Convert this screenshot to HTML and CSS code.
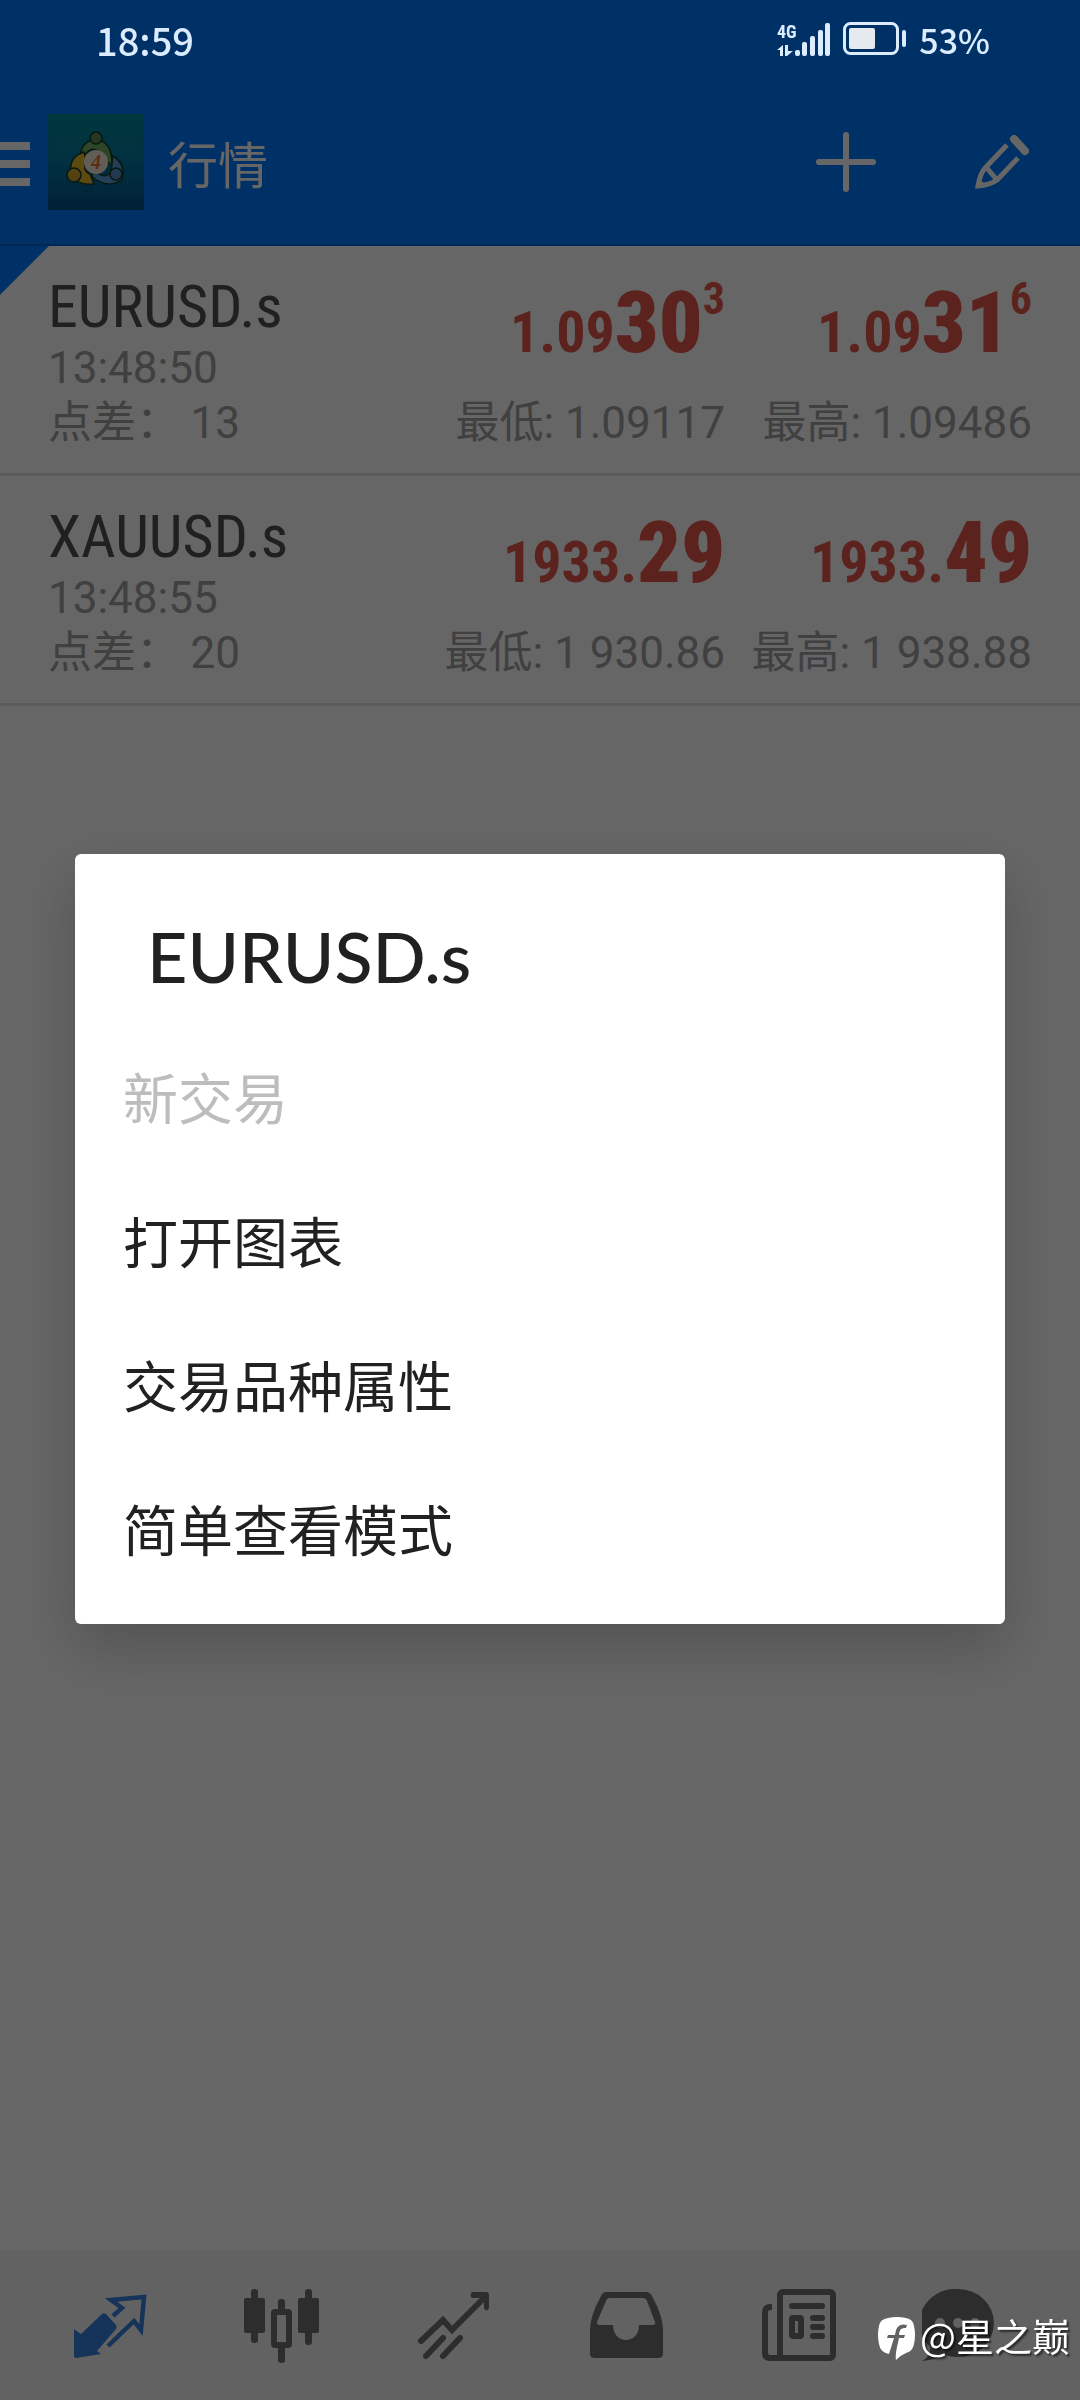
FILE: index.html
```html
<!DOCTYPE html>
<html lang="zh-CN">
<head>
  <meta charset="UTF-8">
  <meta name="viewport" content="width=device-width, initial-scale=1">
  <title>行情</title>
  <link rel="stylesheet" href="styles.css">
</head>
<body>
  <header class="header">
    <div class="status">
      <span class="clock">18:59</span>
      <div class="status-icons">
        <svg width="54" height="38" viewBox="0 -3 54 38" fill="currentColor">
          <text class="net" x="0" y="15">4G</text>
          <path d="M0 27l6-5v11H3v-6zM8 22h3v6h5l-6 5H8z"/>
          <rect x="18" y="27" width="5" height="6" rx="2"/>
          <rect x="25" y="19" width="5" height="14" rx="2"/>
          <rect x="33" y="13" width="5" height="20" rx="2"/>
          <rect x="41" y="7" width="5" height="26" rx="2"/>
          <rect x="48" y="0" width="5" height="33" rx="2"/>
        </svg>
        <svg width="64" height="34" viewBox="0 0 64 34">
          <rect x="1.500" y="1.500" width="53" height="30" rx="6" fill="none" stroke="currentColor" stroke-width="3"/>
          <rect x="6" y="6" width="26" height="21" rx="2" fill="#e6e9ee"/>
          <rect x="59" y="8" width="4" height="17" rx="2" fill="currentColor"/>
        </svg>
        <span class="battery">53%</span>
      </div>
    </div>

    <div class="toolbar">
      <button class="menu" aria-label="菜单"><i></i><i></i><i></i></button>
      <svg class="logo" viewBox="0 0 96 96">
        <defs>
          <linearGradient id="sky" x1="0" y1="0" x2="0" y2="1">
            <stop offset="0" stop-color="#008a98"/>
            <stop offset=".5" stop-color="#0078a0"/>
            <stop offset="1" stop-color="#005088"/>
          </linearGradient>
        </defs>
        <rect width="96" height="96" fill="url(#sky)"/>
        <path d="M0 16H96M0 32H96M0 48H96M0 64H96M0 80H96M16 0V96M32 0V96M48 0V96M64 0V96M80 0V96" stroke="#fff" stroke-opacity=".06"/>
        <g stroke="#123d2c" stroke-width="1.500">
          <path d="M33 44Q31 28 48 25Q65 28 64 52L55 43Q49 33 42 36Z" fill="#6fae62"/>
          <path d="M36 38Q20 43 23 60Q28 72 46 70L42 60Q34 57 38 46Z" fill="#e8b82c"/>
          <path d="M65 42Q78 50 74 65Q62 76 44 63L45 56Q58 67 63 57Z" fill="#5a9fd8"/>
          <circle cx="48" cy="24" r="6" fill="#5c8a50"/>
          <circle cx="26" cy="61" r="7" fill="#d0a030"/>
          <circle cx="68" cy="60" r="6" fill="#5592c8"/>
        </g>
        <circle cx="48" cy="48" r="12" fill="#f4ead8"/>
        <text class="logo-num" x="48" y="55" text-anchor="middle">4</text>
      </svg>
      <h1>行情</h1>
      <button class="add" aria-label="添加">
        <svg width="60" height="60" viewBox="0 0 60 60" fill="none" stroke="#fff" stroke-width="6" stroke-linecap="round">
          <path d="M30 3V57M3 30H57"/>
        </svg>
      </button>
      <button aria-label="编辑">
        <svg width="54" height="54" viewBox="0 0 54 54" fill="none" stroke="#fff" stroke-width="5">
          <path d="M32 10L11 32Q5 38 3 51Q15 50 22 45L43 23M11 32L22 45"/>
          <path d="M3 52V43L11 50Z" fill="#fff" stroke="none"/>
          <path d="M39 4L50 16" stroke-width="8" stroke-linecap="round"/>
        </svg>
      </button>
    </div>
  </header>

  <main>
    <ul class="quotes">
      <li class="quote selected">
        <div class="info">
          <h2>EURUSD.s</h2>
          <p>13:48:50</p>
          <p class="spread"><span>点差：</span><span>13</span></p>
        </div>
        <div class="side">
          <div class="price">1.09<b>30</b><sup>3</sup></div>
          <p>最低: 1.09117</p>
        </div>
        <div class="side">
          <div class="price">1.09<b>31</b><sup>6</sup></div>
          <p>最高: 1.09486</p>
        </div>
      </li>
      <li class="quote">
        <div class="info">
          <h2>XAUUSD.s</h2>
          <p>13:48:55</p>
          <p class="spread"><span>点差：</span><span>20</span></p>
        </div>
        <div class="side">
          <div class="price">1933.<b>29</b></div>
          <p>最低: 1 930.86</p>
        </div>
        <div class="side">
          <div class="price">1933.<b>49</b></div>
          <p>最高: 1 938.88</p>
        </div>
      </li>
    </ul>
  </main>

  <nav class="tabs">
    <button class="active" aria-label="行情">
      <svg width="76" height="74" viewBox="-2 -6 76 74">
        <path d="M0 34L7 39L27 20Q29 17 32 19L42 30Q43 32 42 34L23 56L27 59L2 63Q0 63 0 61Z" fill="currentColor"/>
        <path d="M39 21L48 13L37 5L70 2L67 35L60 26L34 51" fill="none" stroke="currentColor" stroke-width="4.500"/>
      </svg>
    </button>
    <button aria-label="图表">
      <svg width="76" height="74" viewBox="0 0 76 74" fill="currentColor">
        <rect y="9" width="21" height="35" rx="2"/>
        <rect x="7" width="7" height="54" rx="3"/>
        <rect x="54" y="9" width="21" height="35" rx="2"/>
        <rect x="61" width="7" height="56" rx="3"/>
        <rect x="34" y="10" width="7" height="14" rx="3"/>
        <rect x="34" y="56" width="7" height="18" rx="3"/>
        <rect x="30" y="23" width="15" height="33" rx="1" fill="none" stroke="currentColor" stroke-width="6"/>
      </svg>
    </button>
    <button aria-label="交易">
      <svg width="76" height="74" viewBox="-2 -3 76 74" fill="none" stroke="currentColor" stroke-width="6" stroke-linecap="round">
        <path d="M3 49L25 28L34 38L67 5M8 64L25 46M25 64L42 46"/>
        <path d="M54 0H68Q71 0 71 3V16Q68 21 66 16V9L62 6H54Q51 3 54 0Z" fill="currentColor" stroke="none"/>
      </svg>
    </button>
    <button aria-label="历史">
      <svg width="76" height="74" viewBox="-2 -3 76 74" fill="currentColor" fill-rule="evenodd">
        <path d="M16 0H56Q60 0 62 4Q73 24 73 38V62Q73 66 68 66H5Q0 66 0 62V38Q0 24 11 4Q13 0 16 0ZM20 6Q17 6 16 9L7 30Q7 33 9 33H23C23 53 49 53 49 33H63Q66 33 65 30L57 9Q56 6 53 6Z"/>
      </svg>
    </button>
    <button aria-label="新闻">
      <svg width="76" height="74" viewBox="-2 0 76 74" fill="none" stroke="currentColor" stroke-width="6">
        <path d="M10 18H8Q3 18 3 24V64Q3 69 8 69H19"/>
        <rect x="18" y="3" width="53" height="66" rx="3"/>
        <rect x="30" y="29" width="9" height="18" rx="1"/>
        <path d="M30 17H60M51 29H60M51 38H60M51 47H60" stroke-linecap="round"/>
      </svg>
    </button>
    <button aria-label="消息">
      <svg width="96" height="74" viewBox="0 0 96 74" fill="currentColor" fill-rule="evenodd">
        <path d="M36 0A36 34 0 0 1 36 68Q28 68 22 66Q12 71 0 72Q9 67 8 58A36 34 0 0 1 36 0ZM13 34a5 5 0 0 0 10 0a5 5 0 0 0-10 0ZM31 34a5 5 0 0 0 10 0a5 5 0 0 0-10 0ZM48 34a5 5 0 0 0 10 0a5 5 0 0 0-10 0Z"/>
      </svg>
    </button>
  </nav>

  <div class="overlay">
    <div class="dialog" role="dialog" aria-labelledby="dialog-title">
      <h2 id="dialog-title">EURUSD.s</h2>
      <button disabled>新交易</button>
      <button>打开图表</button>
      <button>交易品种属性</button>
      <button>简单查看模式</button>
    </div>
  </div>

  <div class="watermark">
    <svg width="38" height="44" viewBox="0 0 38 44">
      <path d="M10 1Q19-1 28 1Q35 2 36 9Q38 18 36 27Q35 34 28 36Q23 38 18 43Q17 39 19 30L21 21H26L27 18H21Q21 10 28 11L29 8Q18 5 17 18H10L9 21H16L11 37Q2 35 1 27Q-1 18 1 9Q2 2 10 1Z" fill="#fff"/>
    </svg>
    <span>@星之巅</span>
  </div>
</body>
</html>
```
FILE: styles.css
```css
* {
  box-sizing: border-box;
  margin: 0;
  padding: 0;
}

body {
  min-height: 100vh;
  display: flex;
  flex-direction: column;
  background: #fff;
  font-family: Roboto, "Noto Sans CJK SC", sans-serif;
}

button {
  border: none;
  background: none;
  color: inherit;
  font: inherit;
  cursor: pointer;
}

svg {
  display: block;
}

/* header */
.header {
  background: #007aff;
  color: #fff;
  border-bottom: 2px solid #0064d8;
}

.status {
  position: relative;
  z-index: 2;
  display: flex;
  justify-content: space-between;
  align-items: center;
  height: 80px;
  padding: 0 90px 2px 96px;
  color: #dcecff;
  font-family: "Noto Sans CJK SC", sans-serif;
  font-weight: 500;
}

.clock {
  font-size: 38px;
}

.status-icons {
  display: flex;
  align-items: center;
  gap: 12px;
}

.battery {
  font-size: 34px;
}

.net {
  font: bold 18px "Roboto Condensed", Roboto, sans-serif;
}

.toolbar {
  display: flex;
  align-items: center;
  height: 164px;
  padding-right: 51px;
}

.menu {
  width: 30px;
  margin-right: 18px;
  padding-top: 4px;
}

.menu i {
  display: block;
  height: 8px;
  background: #fff;
}

.menu i + i {
  margin-top: 10px;
}

.logo {
  width: 96px;
  height: 96px;
}

.logo-num {
  font: italic bold 20px "Liberation Serif", serif;
  fill: #e0762c;
}

.toolbar h1 {
  margin-left: 24px;
  font-size: 50px;
  font-weight: 400;
}

.add {
  margin-left: auto;
  margin-right: 99px;
}

/* quotes */
.quotes {
  list-style: none;
}

.quote {
  display: grid;
  grid-template-columns: 1fr 307px 307px;
  padding: 26px 48px 22px;
  border-bottom: 3px solid #e4e4e4;
  color: #a0a0a0;
  font-size: 44px;
  line-height: 55px;
}

.selected {
  background: linear-gradient(135deg, #007aff 34px, transparent 35px);
}

.quote h2 {
  font-family: "Roboto Condensed", Roboto, sans-serif;
  font-size: 60px;
  font-weight: 400;
  line-height: 69px;
  color: #505050;
}

.spread {
  display: flex;
  justify-content: space-between;
  width: 192px;
}

.side {
  text-align: right;
  white-space: nowrap;
}

.price {
  height: 124px;
  font-family: "Roboto Condensed", Roboto, sans-serif;
  font-size: 58px;
  font-weight: 700;
  line-height: 120px;
  color: #e6574b;
}

.price b {
  font-size: 86px;
  line-height: 86px;
}

.price sup {
  font-size: 44px;
  line-height: 0;
  vertical-align: 38px;
}

/* bottom tabs */
.tabs {
  display: grid;
  grid-template-columns: repeat(6, 1fr);
  height: 149px;
  margin-top: auto;
  padding: 0 24px;
  background: #f5f5f5;
  color: #707070;
}

.tabs button {
  display: flex;
  justify-content: center;
  align-items: center;
}

.tabs .active {
  color: #3880e0;
}

/* popup menu */
.overlay {
  position: fixed;
  inset: 0;
  z-index: 1;
  display: flex;
  align-items: center;
  padding: 78px 75px 0;
  background: rgba(0, 0, 0, 0.6);
}

.dialog {
  flex: 1;
  padding: 36px 0 25px;
  border-radius: 6px;
  background: #fff;
  color: #212121;
  box-shadow: 0 24px 60px rgba(0, 0, 0, 0.2);
}

.dialog h2 {
  padding: 0 72px;
  font-family: Lato, sans-serif;
  font-size: 70px;
  font-weight: 500;
  line-height: 133px;
}

.dialog button {
  display: block;
  width: 100%;
  height: 144px;
  padding: 0 48px;
  font-family: "Noto Sans CJK SC", sans-serif;
  font-size: 55px;
  text-align: left;
}

.dialog button:disabled {
  color: #bdbdbd;
}

.watermark {
  position: fixed;
  right: 10px;
  bottom: 38px;
  z-index: 3;
  display: flex;
  align-items: center;
  gap: 4px;
  color: #fff;
  font-family: "Noto Sans CJK SC", sans-serif;
  font-size: 38px;
  line-height: 54px;
  text-shadow: 2px 2px 2px rgba(0, 0, 0, 0.6);
}

.watermark svg {
  margin-top: 8px;
}
```
